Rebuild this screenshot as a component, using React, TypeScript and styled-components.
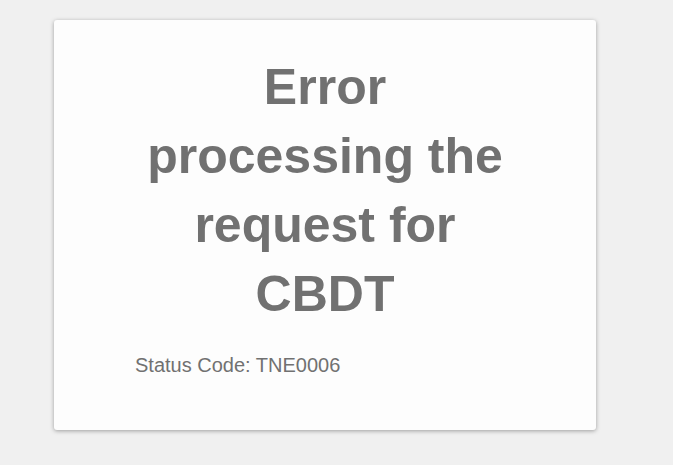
import {FC} from "react";
import styled, {createGlobalStyle} from "styled-components";

const GlobalStyle = createGlobalStyle`
  html, body {
    margin: 0;
    padding: 0;
    background-color: #f0f0f0;
    font-family: "Liberation Sans", Arial, sans-serif;
  }
`

const App: FC = () => {
  return <Page>
    <GlobalStyle/>
    <Card>
      <Title>Error processing the request for CBDT</Title>
      <StatusText>Status Code: TNE0006</StatusText>
    </Card>
  </Page>
}

const Page = styled.div`
  width: 100%;
  min-height: 465px;
  padding-top: 20px;
  padding-left: 54px;
  box-sizing: border-box;
`

const Card = styled.div`
  width: 542px;
  height: 410px;
  box-sizing: border-box;
  padding: 33px 81px 0 81px;
  background-color: #fdfdfd;
  border-radius: 3px;
  box-shadow: 0 1px 4px rgba(0, 0, 0, 0.35);
  display: flex;
  flex-direction: column;
`

const Title = styled.h1`
  margin: 0;
  font-size: 50px;
  line-height: 69px;
  font-weight: bold;
  color: #717171;
  text-align: center;
`

const StatusText = styled.div`
  margin-top: 25px;
  font-size: 20px;
  line-height: 23px;
  color: #717171;
`

export default App;
